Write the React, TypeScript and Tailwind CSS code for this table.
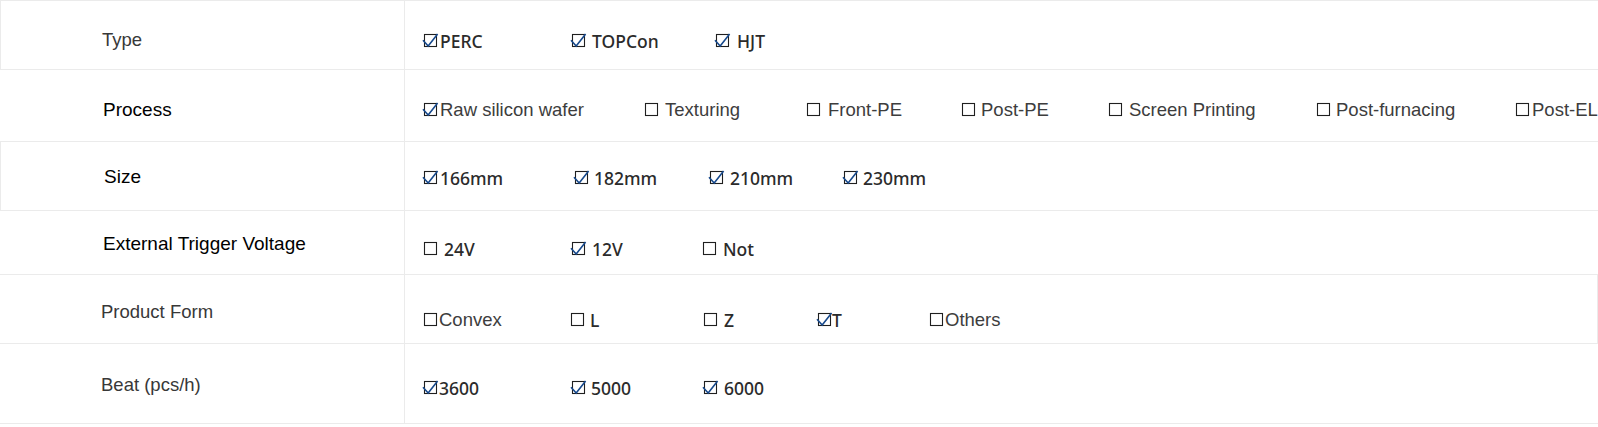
type Opt = {
  text: string;
  checked: boolean;
  w: string; // slot width, up to the next box
  gap: string; // space between box and text
  font: string;
};

type Row = {
  label: string;
  labelClass: string;
  rowClass: string;
  leftClass: string;
  labelPad: string;
  optPad: string;
  opts: Opt[];
};

const ya = "font-['Noto_Sans','Noto_Sans_CJK_SC',sans-serif] font-medium text-[17.5px] text-[#2b2b2b]";
const ar = "font-['Liberation_Sans',Arial,sans-serif] text-[18.5px] text-[#3d3d3d]";

const grey = 'pl-[101px] text-[18.5px] text-[#383838]';
const dark = 'pl-[103px] text-[19px] text-black';

const rows: Row[] = [
  {
    label: 'Type',
    labelClass: grey,
    rowClass: 'h-[70px] border-t border-l',
    leftClass: 'w-[404px]',
    labelPad: 'pt-[30px]',
    optPad: 'pt-[30px]',
    opts: [
      { text: 'PERC', checked: true, w: 'w-[148px]', gap: 'ml-[3px]', font: ya },
      { text: 'TOPCon', checked: true, w: 'w-[144px]', gap: 'ml-[7px]', font: ya },
      { text: 'HJT', checked: true, w: 'w-auto', gap: 'ml-[8px]', font: ya },
    ],
  },
  {
    label: 'Process',
    labelClass: dark,
    rowClass: 'h-[72px]',
    leftClass: 'w-[405px]',
    labelPad: 'pt-[31px]',
    optPad: 'pt-[30px]',
    opts: [
      { text: 'Raw silicon wafer', checked: true, w: 'w-[221px]', gap: 'ml-[3px]', font: ar },
      { text: 'Texturing', checked: false, w: 'w-[162px]', gap: 'ml-[7px]', font: ar },
      { text: 'Front-PE', checked: false, w: 'w-[155px]', gap: 'ml-[8px]', font: ar },
      { text: 'Post-PE', checked: false, w: 'w-[147px]', gap: 'ml-[6px]', font: ar },
      { text: 'Screen Printing', checked: false, w: 'w-[208px]', gap: 'ml-[7px]', font: ar },
      { text: 'Post-furnacing', checked: false, w: 'w-[199px]', gap: 'ml-[6px]', font: ar },
      { text: 'Post-EL', checked: false, w: 'w-auto', gap: 'ml-[3px]', font: ar },
    ],
  },
  {
    label: 'Size',
    labelClass: dark,
    rowClass: 'h-[69px] border-l',
    leftClass: 'w-[404px]',
    labelPad: 'pt-[26px]',
    optPad: 'pt-[26px]',
    opts: [
      { text: '166mm', checked: true, w: 'w-[151px]', gap: 'ml-[3px]', font: ya },
      { text: '182mm', checked: true, w: 'w-[135px]', gap: 'ml-[6px]', font: ya },
      { text: '210mm', checked: true, w: 'w-[134px]', gap: 'ml-[7px]', font: ya },
      { text: '230mm', checked: true, w: 'w-auto', gap: 'ml-[6px]', font: ya },
    ],
  },
  {
    label: 'External Trigger Voltage',
    labelClass: dark,
    rowClass: 'h-[64px]',
    leftClass: 'w-[405px]',
    labelPad: 'pt-[24px]',
    optPad: 'pt-[28px]',
    opts: [
      { text: '24V', checked: false, w: 'w-[148px]', gap: 'ml-[7px]', font: ya },
      { text: '12V', checked: true, w: 'w-[131px]', gap: 'ml-[7px]', font: ya },
      { text: 'Not', checked: false, w: 'w-auto', gap: 'ml-[7px]', font: ya },
    ],
  },
  {
    label: 'Product Form',
    labelClass: grey,
    rowClass: 'h-[69px] border-r',
    leftClass: 'w-[405px]',
    labelPad: 'pt-[28px]',
    optPad: 'pt-[35px]',
    opts: [
      { text: 'Convex', checked: false, w: 'w-[147px]', gap: 'ml-[2px]', font: ar },
      { text: 'L', checked: false, w: 'w-[133px]', gap: 'ml-[6px]', font: ya },
      { text: 'Z', checked: false, w: 'w-[114px]', gap: 'ml-[7px]', font: ya },
      { text: 'T', checked: true, w: 'w-[112px]', gap: 'ml-[1px]', font: ya },
      { text: 'Others', checked: false, w: 'w-auto', gap: 'ml-[2px]', font: ar },
    ],
  },
  {
    label: 'Beat (pcs/h)',
    labelClass: grey,
    rowClass: 'h-[80px]',
    leftClass: 'w-[405px]',
    labelPad: 'pt-[32px]',
    optPad: 'pt-[34px]',
    opts: [
      { text: '3600', checked: true, w: 'w-[148px]', gap: 'ml-[2px]', font: ya },
      { text: '5000', checked: true, w: 'w-[132px]', gap: 'ml-[6px]', font: ya },
      { text: '6000', checked: true, w: 'w-auto', gap: 'ml-[7px]', font: ya },
    ],
  },
];

function Box({ checked }: { checked: boolean }) {
  return (
    <svg width="13" height="14" viewBox="0 0 13 14" className="shrink-0 overflow-visible">
      <rect x="0.5" y="0.5" width="12" height="12" fill="none" stroke="#1f1f1f" strokeWidth="1.1" />
      {checked && (
        <path d="M-1 6.2 L4.2 12 L13.6 0" fill="none" stroke="#17498c" strokeWidth="1.6" />
      )}
    </svg>
  );
}

function App() {
  return (
    <div className="min-h-screen w-full overflow-hidden bg-white">
      {rows.map((r) => (
        <div key={r.label} className={`flex box-border border-b border-[#ebebeb] ${r.rowClass}`}>
          {/* label cell */}
          <div className={`shrink-0 box-border border-r border-[#ebebeb] ${r.leftClass} ${r.labelPad}`}>
            <span
              className={`block whitespace-nowrap font-['Liberation_Sans',Arial,sans-serif] leading-[18px] ${r.labelClass}`}
            >
              {r.label}
            </span>
          </div>

          {/* options cell */}
          <div className={`flex min-w-0 flex-1 items-start pl-[19px] ${r.optPad}`}>
            {r.opts.map((o) => (
              <div key={o.text} className={`flex h-[20px] shrink-0 items-center whitespace-nowrap ${o.w}`}>
                <Box checked={o.checked} />
                <span className={`leading-[20px] ${o.gap} ${o.font}`}>{o.text}</span>
              </div>
            ))}
          </div>
        </div>
      ))}
    </div>
  );
}

export default App;
